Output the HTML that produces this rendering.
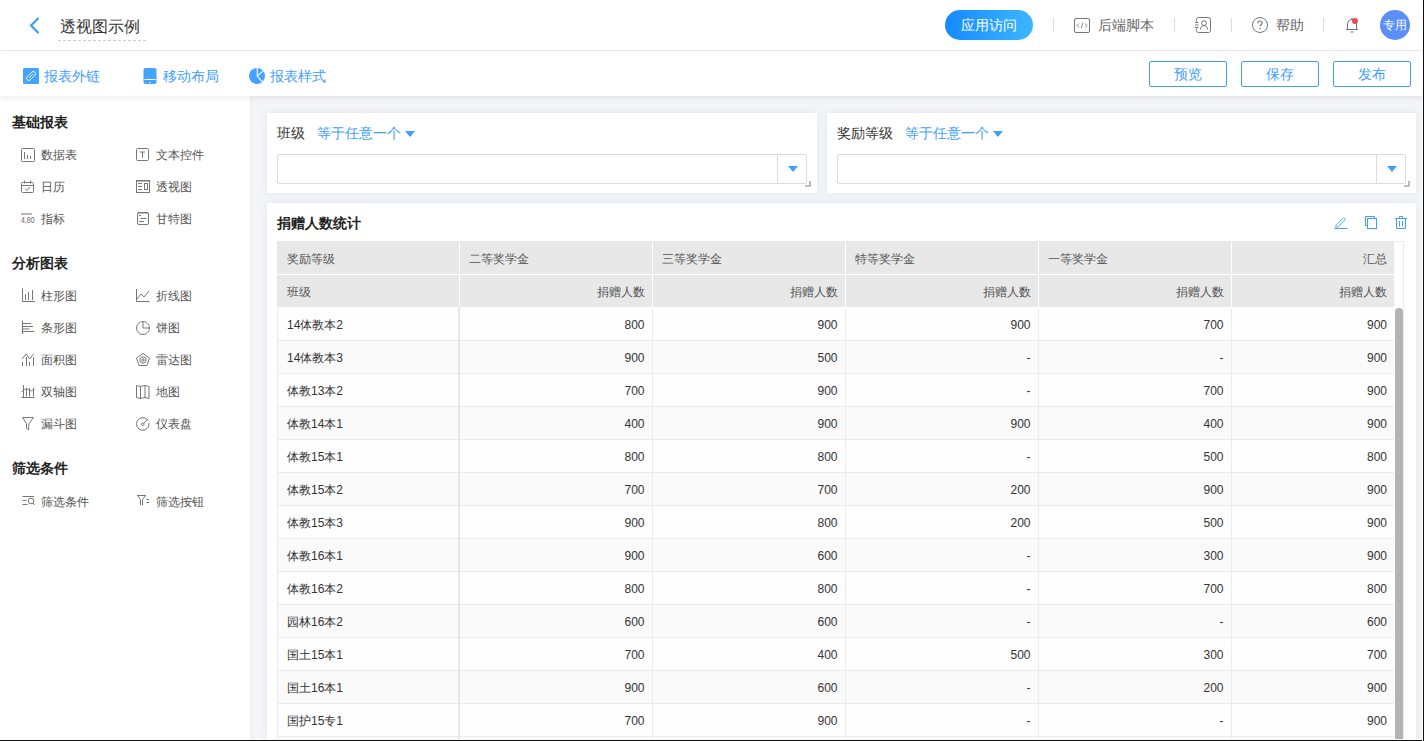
<!DOCTYPE html>
<html><head><meta charset="utf-8">
<style>
*{box-sizing:border-box;margin:0;padding:0}
html,body{width:1424px;height:741px;overflow:hidden;background:#fff;font-family:"Liberation Sans",sans-serif;color:#333}
.abs{position:absolute}
svg{position:absolute;overflow:visible}
#hdr{position:absolute;left:0;top:0;width:1424px;height:51px;background:#fff;border-bottom:1px solid #ebebeb}
#tb{position:absolute;left:0;top:51px;width:1424px;height:45px;background:#fff;box-shadow:0 2px 6px rgba(0,0,0,.08);z-index:3}
#side{position:absolute;left:0;top:96px;width:250px;height:645px;background:#fff}
#main{position:absolute;left:250px;top:96px;width:1174px;height:645px;background:#f4f5f9;box-shadow:inset 1px 0 2px rgba(0,0,0,.03)}
.card{position:absolute;background:#fff;box-shadow:0 0 8px rgba(50,40,130,.08)}
.t{position:absolute;white-space:nowrap;line-height:1}

.hd{font-size:16px;color:#333}
.hg{font-size:14px;color:#666}
.dv{position:absolute;top:18px;width:1px;height:14px;background:#ddd}
.tbt{font-size:14px;color:#409eff}
.btn{position:absolute;top:61px;width:78px;height:26px;border:1px solid #409eff;border-radius:2px;color:#409eff;font-size:14px;line-height:24px;text-align:center}
.sh{font-size:14px;font-weight:bold;color:#222}
.si{font-size:12px;color:#555}
.ic{stroke:#777;fill:none;stroke-width:1}
.fl{font-size:14px;color:#333}
.inp{position:absolute;height:30px;border:1px solid #dcdcdc;border-radius:2px;background:#fff}
.inp .dd{position:absolute;right:0;top:0;width:29px;height:28px;border-left:1px solid #dcdcdc}
.tri{position:absolute;width:0;height:0;border-left:5.5px solid transparent;border-right:5.5px solid transparent;border-top:6px solid #409eff}
.blue{color:#409eff !important}
#bottom{position:absolute;left:0;top:739px;width:1424px;height:2px;background:#111;border-top:1px solid #fafafa;z-index:10}
table{position:absolute;left:10px;top:38px;border-collapse:collapse;table-layout:fixed;font-size:12px}
td{height:33px;padding:2px 7px 0 9px;white-space:nowrap;text-align:right;color:#333;border-bottom:1px solid #ebebeb;border-left:1px solid #ebebeb;line-height:1}
td.c1{text-align:left;border-left:none;padding-left:10px}
tr.even td{background:#fafafa}
tr.odd td{background:#fefefe}
tr.h td{padding-top:3px;background:#e8e8e8;color:#555;border-bottom:1px solid #fff;border-left:1px solid #fff}
tr.h td.c1{border-left:none}
tr.h td.l{text-align:left}
</style></head><body>
<div id="hdr">
  <svg style="left:28px;top:17px" width="12" height="17" viewBox="0 0 12 17"><path d="M10 1.5L3 8.5L10 15.5" fill="none" stroke="#2f9bff" stroke-width="2.1" stroke-linecap="round" stroke-linejoin="round"/></svg>
  <div class="t hd" style="left:60px;top:19px">透视图示例</div>
  <div class="abs" style="left:58px;top:40px;width:88px;border-top:1px dashed #ccc"></div>

  <div class="abs" style="left:945px;top:10px;width:88px;height:30px;border-radius:15px;background:linear-gradient(90deg,#168aff,#3db6ff)"></div>
  <div class="t" style="left:961px;top:18px;font-size:14px;color:#fff">应用访问</div>
  <div class="dv" style="left:1053px"></div>
  <svg style="left:1074px;top:18px" width="16" height="16" viewBox="0 0 16 16"><rect x="0.5" y="0.5" width="15" height="14" rx="1.5" fill="none" stroke="#777"/><path d="M5 5.5L3 7.5L5 9.5M11 5.5L13 7.5L11 9.5M8.8 4.8L7.2 10.2" fill="none" stroke="#777" stroke-width="0.9"/></svg>
  <div class="t hg" style="left:1098px;top:18px">后端脚本</div>
  <div class="dv" style="left:1174px"></div>
  <svg style="left:1195px;top:17px" width="17" height="16" viewBox="0 0 17 16"><path d="M1.5 4.5V2.5A2 2 0 0 1 3.5 0.5H13.5A2 2 0 0 1 15.5 2.5V13.5A2 2 0 0 1 13.5 15.5H3.5A2 2 0 0 1 1.5 13.5V11.5M0 5.5H3.5M0 8H3.5M0 10.5H3.5" fill="none" stroke="#777"/><circle cx="9" cy="6.2" r="2.4" fill="none" stroke="#777"/><path d="M5.5 12.5C5.5 10 7 8.6 9 8.6S12.5 10 12.5 12.5" fill="none" stroke="#777"/></svg>
  <div class="dv" style="left:1231px"></div>
  <svg style="left:1252px;top:17px" width="16" height="16" viewBox="0 0 16 16"><circle cx="8" cy="8" r="7.5" fill="none" stroke="#777"/><path d="M5.8 6.2C5.8 4.8 6.8 4 8 4S10.2 4.8 10.2 6C10.2 7.5 8 7.6 8 9.3" fill="none" stroke="#777" stroke-width="1.1"/><circle cx="8" cy="11.6" r="0.8" fill="#777"/></svg>
  <div class="t hg" style="left:1276px;top:18px">帮助</div>
  <div class="dv" style="left:1323px"></div>
  <svg style="left:1345px;top:17px" width="14" height="16" viewBox="0 0 14 16"><path d="M2.5 12.5V7C2.5 4.5 4.5 2.5 7 2.5S11.5 4.5 11.5 7V12.5M1 12.5H13M5.5 15H8.5M7 0.5V2.5" fill="none" stroke="#777"/><circle cx="10" cy="4" r="3" fill="#e84f50"/></svg>
  <div class="abs" style="left:1380px;top:10px;width:30px;height:30px;border-radius:50%;background:#5a8ef8"></div>
  <div class="t" style="left:1383px;top:19px;font-size:12px;color:#fff">专用</div>
</div>
<div id="tb">
  <svg style="left:23px;top:17px" width="16" height="16" viewBox="0 0 16 16"><rect width="16" height="16" rx="1.5" fill="#44a3ff"/><g transform="rotate(-45 8 8)"><rect x="2.6" y="5.8" width="10.8" height="4.4" rx="2.2" fill="none" stroke="#fff" stroke-width="0.9"/><path d="M5.5 8H10.5" stroke="#fff" stroke-width="0.9"/></g></svg>
  <div class="t tbt" style="left:44px;top:18px">报表外链</div>
  <svg style="left:143px;top:17px" width="14" height="16" viewBox="0 0 14 16"><rect x="0.5" y="0" width="13" height="16" rx="2" fill="#44a3ff"/><path d="M1.5 11.5H12.5" stroke="#fff" stroke-width="1"/><path d="M6 14.5H7.6" stroke="#fff" stroke-width="1"/></svg>
  <div class="t tbt" style="left:163px;top:18px">移动布局</div>
  <svg style="left:249px;top:17px" width="16" height="16" viewBox="0 0 16 16"><circle cx="8" cy="8" r="8" fill="#44a3ff"/><path d="M8.3 8.2V-0.5M8.3 8.2L14.5 2.6M8.3 8.2L14 14.6" stroke="#fff" stroke-width="1.1" fill="none"/></svg>
  <div class="t tbt" style="left:270px;top:18px">报表样式</div>
  <div class="btn" style="left:1149px;top:10px">预览</div>
  <div class="btn" style="left:1241px;top:10px">保存</div>
  <div class="btn" style="left:1333px;top:10px">发布</div>
</div>
<div id="side">
  <div class="t sh" style="left:12px;top:19px">基础报表</div>
  <!-- row1 y=155 -->
  <svg style="left:21px;top:52px" width="14" height="14" viewBox="0 0 14 14"><rect x="0.5" y="0.5" width="13" height="13" rx="1" class="ic"/><path d="M3.5 4V11M6.5 7V11M9.5 8V11" class="ic"/></svg>
  <div class="t si" style="left:41px;top:53px">数据表</div>
  <svg style="left:136px;top:52px" width="14" height="14" viewBox="0 0 14 14"><rect x="0.5" y="0.5" width="12" height="12" rx="1" class="ic"/><path d="M4 4H9M6.5 4V10" class="ic"/></svg>
  <div class="t si" style="left:156px;top:53px">文本控件</div>
  <!-- row2 y=187 -->
  <svg style="left:21px;top:84px" width="14" height="14" viewBox="0 0 14 14"><rect x="0.5" y="2.5" width="12" height="10" rx="1" class="ic"/><path d="M0.5 5.5H12.5M3.5 0.5V3.5M9.5 0.5V3.5M4 8.5L6 10.5L9 7" class="ic"/></svg>
  <div class="t si" style="left:41px;top:85px">日历</div>
  <svg style="left:136px;top:84px" width="15" height="14" viewBox="0 0 15 14"><rect x="0.5" y="0.5" width="13" height="12" class="ic"/><path d="M0.5 1H13.5" class="ic" stroke-width="1.6"/><path d="M2 3.5H6M2 6.5H6M2 9.5H6" class="ic"/><rect x="8.5" y="3.5" width="3" height="6" class="ic"/></svg>
  <div class="t si" style="left:156px;top:85px">透视图</div>
  <!-- row3 y=219 -->
  <svg style="left:20px;top:116px" width="16" height="14" viewBox="0 0 16 14"><path d="M1 2H12" stroke="#888" stroke-width="1.2" fill="none"/><text x="1" y="11" font-size="9" fill="#666" font-family="Liberation Sans" textLength="13.5" lengthAdjust="spacingAndGlyphs">4,80</text></svg>
  <div class="t si" style="left:41px;top:117px">指标</div>
  <svg style="left:136px;top:116px" width="14" height="14" viewBox="0 0 14 14"><rect x="1.5" y="0.5" width="11" height="12" rx="1.5" class="ic"/><path d="M2 1H12" class="ic" stroke-width="1.4"/><path d="M3 3.5H5M4.5 6.5H10.5M3 9.5H8" class="ic"/></svg>
  <div class="t si" style="left:156px;top:117px">甘特图</div>

  <div class="t sh" style="left:12px;top:160px">分析图表</div>
  <!-- y 296 -->
  <svg style="left:21px;top:192px" width="14" height="14" viewBox="0 0 14 14"><path d="M1.5 0.5V13.5H14M4.5 6V12M7.5 4V12M11.5 2V12" class="ic"/></svg>
  <div class="t si" style="left:41px;top:194px">柱形图</div>
  <svg style="left:136px;top:193px" width="14" height="14" viewBox="0 0 14 14"><path d="M0.5 0V12.5H13.5M1 10L5 5L8 8L13 2" class="ic"/></svg>
  <div class="t si" style="left:156px;top:194px">折线图</div>
  <!-- y 328 -->
  <svg style="left:21px;top:225px" width="14" height="14" viewBox="0 0 14 14"><path d="M1.5 0V13M1.5 2.5H10M1.5 5.5H12M1.5 8H8.5M1.5 10.5H13.5" class="ic"/></svg>
  <div class="t si" style="left:41px;top:226px">条形图</div>
  <svg style="left:136px;top:225px" width="14" height="14" viewBox="0 0 14 14"><circle cx="7" cy="7" r="6.5" class="ic"/><path d="M7 0.5V7H13.5" class="ic"/></svg>
  <div class="t si" style="left:156px;top:226px">饼图</div>
  <!-- y 360 -->
  <svg style="left:21px;top:257px" width="14" height="14" viewBox="0 0 14 14"><path d="M1 6L5.2 0.8L8.6 6L12.6 0.8M1.5 9V13M5.5 4V13M8.5 9V13M12.5 4V13" class="ic"/></svg>
  <div class="t si" style="left:41px;top:258px">面积图</div>
  <svg style="left:136px;top:257px" width="14" height="14" viewBox="0 0 14 14"><path d="M7 0.5L13.5 5L11 12.5H3L0.5 5Z" class="ic"/><circle cx="7" cy="7" r="3.2" class="ic"/><circle cx="7" cy="7" r="1.2" class="ic"/></svg>
  <div class="t si" style="left:156px;top:258px">雷达图</div>
  <!-- y 392 -->
  <svg style="left:21px;top:289px" width="14" height="14" viewBox="0 0 14 14"><path d="M2.5 0V12M0.5 12.5H13.5M5.5 3V11.5M8.5 3V11.5M12.5 3V11.5M0.5 7C3 4 5 3.5 7 4.5S10 7 13.5 4" class="ic"/></svg>
  <div class="t si" style="left:41px;top:290px">双轴图</div>
  <svg style="left:136px;top:289px" width="14" height="14" viewBox="0 0 14 14"><path d="M0.5 0.5L4.5 1.5L9 0.5L13 1.5V13.5L9 12.5L4.5 13.5L0.5 12.5ZM4.5 1.5V13.5M9 0.5V12.5" class="ic"/></svg>
  <div class="t si" style="left:156px;top:290px">地图</div>
  <!-- y 424 -->
  <svg style="left:22px;top:321px" width="12" height="14" viewBox="0 0 12 14"><path d="M0.5 0.5H11.5L7 6.5L6.5 13L4.5 11V6.5Z" class="ic"/></svg>
  <div class="t si" style="left:41px;top:322px">漏斗图</div>
  <svg style="left:136px;top:321px" width="14" height="14" viewBox="0 0 14 14"><path d="M11.5 2.8A6.3 6.3 0 1 0 13 6" class="ic"/><circle cx="6.8" cy="7.2" r="1.3" class="ic"/><path d="M7.8 6.2L12 2" class="ic"/></svg>
  <div class="t si" style="left:156px;top:322px">仪表盘</div>

  <div class="t sh" style="left:12px;top:365px">筛选条件</div>
  <!-- y 501 -->
  <svg style="left:22px;top:398px" width="14" height="12" viewBox="0 0 14 12"><path d="M0.5 2.5H12M0.5 6.5H4.5M0.5 10.5H5.5" class="ic"/><circle cx="9" cy="7" r="2.8" class="ic"/><path d="M11 9L12.5 11" class="ic"/></svg>
  <div class="t si" style="left:41px;top:400px">筛选条件</div>
  <svg style="left:137px;top:398px" width="13" height="12" viewBox="0 0 13 12"><path d="M0 1.5H9" class="ic" stroke-width="1.3"/><path d="M0.5 1.5L3.5 5.5V11M8.5 1.5L5.5 5.5V11.5M9.5 5.5H12M9.5 8.5H12" class="ic"/></svg>
  <div class="t si" style="left:156px;top:400px">筛选按钮</div>
</div>
<div id="main">
  <div class="card" style="left:17px;top:17px;width:550px;height:80px">
    <div class="t fl" style="left:10px;top:13px">班级</div>
    <div class="t fl blue" style="left:50px;top:13px">等于任意一个</div>
    <div class="tri" style="left:138px;top:18px"></div>
    <div class="inp" style="left:10px;top:41px;width:530px"><div class="dd"></div><div class="tri" style="left:510px;top:11px"></div></div>
    <svg style="left:538px;top:68px" width="6" height="6" viewBox="0 0 6 6"><path d="M5 0V5H0" fill="none" stroke="#aaa" stroke-width="1.6"/></svg>
  </div>
  <div class="card" style="left:577px;top:17px;width:589px;height:80px">
    <div class="t fl" style="left:10px;top:13px">奖励等级</div>
    <div class="t fl blue" style="left:78px;top:13px">等于任意一个</div>
    <div class="tri" style="left:166px;top:18px"></div>
    <div class="inp" style="left:10px;top:41px;width:569px"><div class="dd"></div><div class="tri" style="left:549px;top:11px"></div></div>
    <svg style="left:577px;top:68px" width="6" height="6" viewBox="0 0 6 6"><path d="M5 0V5H0" fill="none" stroke="#aaa" stroke-width="1.6"/></svg>
  </div>
  <div class="card" style="left:17px;top:107px;width:1149px;height:540px;overflow:hidden">
    <div class="t" style="left:10px;top:13px;font-size:14px;font-weight:bold;color:#222">捐赠人数统计</div>
    <svg style="left:1067px;top:13px" width="14" height="14" viewBox="0 0 14 14"><path d="M1.6 11.2L2 9.2L9.6 1.6L11.4 3.4L3.8 11Z" fill="none" stroke="#409eff" stroke-width="0.9"/><path d="M0.5 12.5H13.5" fill="none" stroke="#409eff"/></svg>
    <svg style="left:1098px;top:13px" width="14" height="14" viewBox="0 0 14 14"><path d="M2.5 9.5H0.5V0.5H9.5V2.5" fill="none" stroke="#409eff" stroke-width="1"/><rect x="2.5" y="2.5" width="9" height="10" fill="none" stroke="#409eff" stroke-width="1"/></svg>
    <svg style="left:1128px;top:13px" width="13" height="15" viewBox="0 0 13 15"><path d="M0 2.5H12M4.5 2.5V0.5H7.5V2.5M1.5 2.5V12.5H10.5V2.5M4.5 5V10.5M7.5 5V10.5" fill="none" stroke="#409eff"/></svg>
    <table>
      <colgroup><col style="width:182px"><col style="width:193px"><col style="width:193px"><col style="width:193px"><col style="width:193px"><col style="width:163px"></colgroup>
      <tr class="h"><td class="c1">奖励等级</td><td class="l">二等奖学金</td><td class="l">三等奖学金</td><td class="l">特等奖学金</td><td class="l">一等奖学金</td><td>汇总</td></tr>
      <tr class="h"><td class="c1">班级</td><td>捐赠人数</td><td>捐赠人数</td><td>捐赠人数</td><td>捐赠人数</td><td>捐赠人数</td></tr>
<tr class="odd"><td class="c1">14体教本2</td><td>800</td><td>900</td><td>900</td><td>700</td><td>900</td></tr>
<tr class="even"><td class="c1">14体教本3</td><td>900</td><td>500</td><td>-</td><td>-</td><td>900</td></tr>
<tr class="odd"><td class="c1">体教13本2</td><td>700</td><td>900</td><td>-</td><td>700</td><td>900</td></tr>
<tr class="even"><td class="c1">体教14本1</td><td>400</td><td>900</td><td>900</td><td>400</td><td>900</td></tr>
<tr class="odd"><td class="c1">体教15本1</td><td>800</td><td>800</td><td>-</td><td>500</td><td>800</td></tr>
<tr class="even"><td class="c1">体教15本2</td><td>700</td><td>700</td><td>200</td><td>900</td><td>900</td></tr>
<tr class="odd"><td class="c1">体教15本3</td><td>900</td><td>800</td><td>200</td><td>500</td><td>900</td></tr>
<tr class="even"><td class="c1">体教16本1</td><td>900</td><td>600</td><td>-</td><td>300</td><td>900</td></tr>
<tr class="odd"><td class="c1">体教16本2</td><td>800</td><td>800</td><td>-</td><td>700</td><td>800</td></tr>
<tr class="even"><td class="c1">园林16本2</td><td>600</td><td>600</td><td>-</td><td>-</td><td>600</td></tr>
<tr class="odd"><td class="c1">国土15本1</td><td>700</td><td>400</td><td>500</td><td>300</td><td>700</td></tr>
<tr class="even"><td class="c1">国土16本1</td><td>900</td><td>600</td><td>-</td><td>200</td><td>900</td></tr>
<tr class="odd"><td class="c1">国护15专1</td><td>700</td><td>900</td><td>-</td><td>-</td><td>900</td></tr>
<tr class="even"><td class="c1">国护15专2</td><td>800</td><td>700</td><td>-</td><td>-</td><td>800</td></tr>
    </table>
    <div class="abs" style="left:10px;top:104px;width:1px;height:440px;background:#ebebeb"></div>
    <div class="abs" style="left:191px;top:104px;width:2px;height:440px;background:#e6e6e6"></div>
    <div class="abs" style="left:1127px;top:38px;width:10px;height:510px;border-top:1px solid #ebebeb;border-right:1px solid #ebebeb;background:#fff"></div>
    <div class="abs" style="left:1128px;top:105px;width:8px;height:440px;border-radius:4px;background:#b4b4b4"></div>
  </div>
</div>
<div id="bottom"></div><div class="abs" style="left:1422px;top:0;width:2px;height:741px;background:#111;border-left:1px solid #fafafa;z-index:10"></div>
</body></html>
